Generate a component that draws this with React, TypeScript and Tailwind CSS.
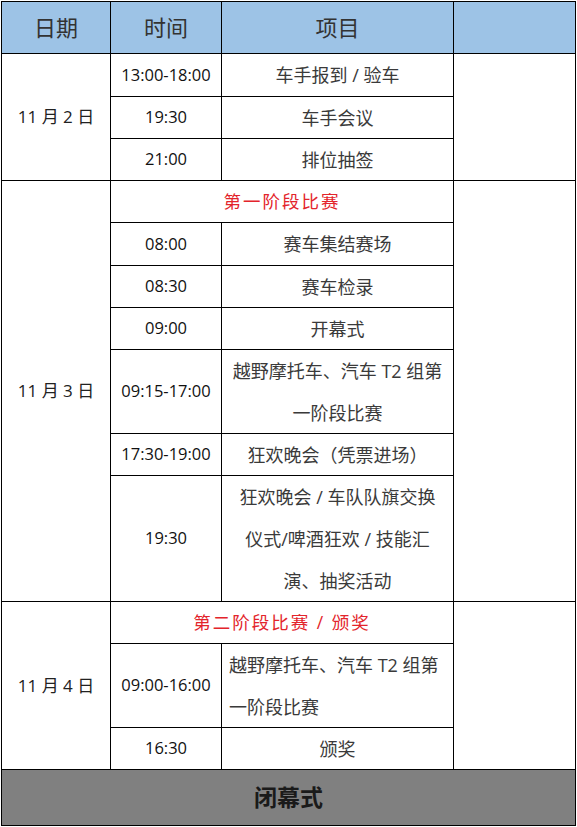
const FONT = "font-['Open_Sans','Noto_Sans_CJK_SC',sans-serif]";

function Cell({
  children,
  className = "",
}: {
  children?: React.ReactNode;
  className?: string;
}) {
  return (
    <div className={`flex items-center justify-center border-b border-r border-black ${className}`}>
      {children}
    </div>
  );
}

function Time({ children, className = "" }: { children: React.ReactNode; className?: string }) {
  return <Cell className={`text-[16.5px] text-[#111] ${className}`}>{children}</Cell>;
}

function Item({ children, className = "" }: { children: React.ReactNode; className?: string }) {
  return <Cell className={`text-[18px] leading-[42px] text-[#3a3a3a] ${className}`}>{children}</Cell>;
}

function Stage({ children }: { children: React.ReactNode }) {
  return (
    <Cell className="col-span-2 text-[17.5px] tracking-[2px] text-[#e3242b]">{children}</Cell>
  );
}

function DateCell({ label, span }: { label: string; span: string }) {
  return <Cell className={`${span} text-[17px] text-[#222]`}>{label}</Cell>;
}

export default function App() {
  return (
    <div className={`min-h-[827px] bg-white pl-px pt-px ${FONT}`}>
      <div className="grid w-[575px] grid-cols-[109px_111px_232px_122px] grid-rows-[52px_43px_42px_42px_42px_43px_42px_42px_84px_42px_126px_42px_84px_42px_56px] border-l border-t border-black">
        {/* header */}
        <Cell className="bg-[#9dc3e6] text-[22px] text-[#333]">日期</Cell>
        <Cell className="bg-[#9dc3e6] text-[22px] text-[#333]">时间</Cell>
        <Cell className="bg-[#9dc3e6] text-[22px] text-[#333]">项目</Cell>
        <Cell className="bg-[#9dc3e6]" />

        {/* 11/2 */}
        <DateCell label="11 月 2 日" span="row-span-3" />
        <Time>13:00-18:00</Time>
        <Item>车手报到 / 验车</Item>
        <Cell className="row-span-3" />
        <Time>19:30</Time>
        <Item>车手会议</Item>
        <Time>21:00</Time>
        <Item>排位抽签</Item>

        {/* 11/3 */}
        <DateCell label="11 月 3 日" span="row-span-7" />
        <Stage>第一阶段比赛</Stage>
        <Cell className="row-span-7" />
        <Time>08:00</Time>
        <Item>赛车集结赛场</Item>
        <Time>08:30</Time>
        <Item>赛车检录</Item>
        <Time>09:00</Time>
        <Item>开幕式</Item>
        <Time>09:15-17:00</Time>
        <Item className="text-center">
          <div>
            越野摩托车、汽车 T2 组第
            <br />
            一阶段比赛
          </div>
        </Item>
        <Time>17:30-19:00</Time>
        <Item>狂欢晚会（凭票进场）</Item>
        <Time>19:30</Time>
        <Item className="text-center">
          <div>
            狂欢晚会 / 车队队旗交换
            <br />
            仪式/啤酒狂欢 / 技能汇
            <br />
            演、抽奖活动
          </div>
        </Item>

        {/* 11/4 */}
        <DateCell label="11 月 4 日" span="row-span-3" />
        <Stage>第二阶段比赛 / 颁奖</Stage>
        <Cell className="row-span-3" />
        <Time>09:00-16:00</Time>
        <Item className="!justify-start pl-[7px]">
          <div>
            越野摩托车、汽车 T2 组第
            <br />
            一阶段比赛
          </div>
        </Item>
        <Time>16:30</Time>
        <Item>颁奖</Item>

        {/* closing */}
        <Cell className="col-span-4 bg-[#808080] text-[23px] font-bold text-[#1a1a1a]">闭幕式</Cell>
      </div>
    </div>
  );
}
